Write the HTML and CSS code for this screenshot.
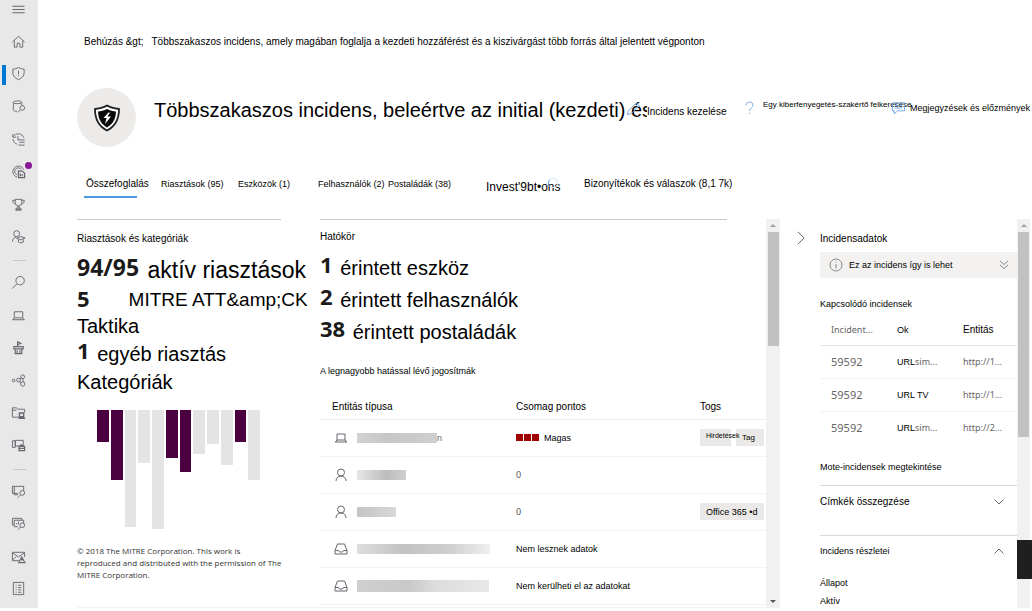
FILE: index.html
```html
<!DOCTYPE html>
<html lang="hu">
<head>
    <meta charset="UTF-8">
    <title>Incidens</title>
    <link rel="stylesheet" href="styles.css">
</head>
<body>
<div class="app">
    <nav class="sidebar">
        <button class="nav-btn menu" aria-label="Menü"><svg viewBox="0 0 16 16"><path d="M1.500 4.500h13M1.500 8h13M1.500 11.500h13" stroke-width="1.200"/></svg></button>
        <button class="nav-btn" aria-label="Kezdőlap"><svg viewBox="0 0 16 16"><path d="M1.500 8.500 8 2.500l6.500 6M3.500 7v7h3v-4h3v4h3V7"/></svg></button>
        <button class="nav-btn active" aria-label="Incidensek"><svg viewBox="0 0 16 16"><path d="M8 1.500c2 1.300 4 1.800 6 1.800v4c0 3.500-2.500 5.700-6 7.200-3.500-1.500-6-3.700-6-7.200v-4c2 0 4-.5 6-1.800zM8 5v4M8 10v1"/></svg></button>
        <button class="nav-btn" aria-label="Adatok"><svg viewBox="0 0 16 16"><ellipse cx="7" cy="3.500" rx="4.500" ry="1.500"/><path d="M2.500 3.500v8c0 1 1.500 1.600 4 1.600M11.500 3.500v3"/><circle cx="12" cy="9.500" r="2.500"/><path d="m10.200 11.300-3 3"/></svg></button>
        <button class="nav-btn" aria-label="Előzmények"><svg viewBox="0 0 16 16"><path d="M2 2v3.500h3.500M2.300 5C5 .500 12 1 13.500 6M2 7.500c.3 3 2.500 5 4.500 5.500M7.500 4.500v4h7M9 11h5.500M8 14h6.500"/></svg></button>
        <button class="nav-btn dot" aria-label="Fenyegetéselemzés"><svg viewBox="0 0 16 16"><path d="M6.500 14A6 6 0 1 1 13.600 6M6.500 11.500A3.800 3.800 0 1 1 11 6M7.500 8v-1"/><path d="M8 7.500h4l2.500 2.500v4.500H8zM10 13v-3M12 13v-2" stroke-width="1.300"/></svg></button>
        <button class="nav-btn" aria-label="Biztonsági pontszám"><svg viewBox="0 0 16 16"><path d="M4.500 2.500h7V6c0 2-1.500 3.500-3.500 3.500S4.500 8 4.500 6zM4.500 3.500H1.800C1.800 6 3 7.300 5 7.500M11.500 3.500h2.700c0 2.500-1.200 3.800-3.200 4M7.300 9.500v2.500M8.700 9.500v2.500M4.500 13.800h7M5.500 12h5v1.800h-5z"/></svg></button>
        <button class="nav-btn" aria-label="Képzés"><svg viewBox="0 0 16 16"><circle cx="6" cy="5" r="3.200"/><path d="M1.500 13.500c.3-3 2-5 4.500-5M6 10l4.500-2L15 9.500l-4.500 2zM8 11.500V14c1.500 1 3.500 1 5 0v-3"/></svg></button>
        <hr>
        <button class="nav-btn" aria-label="Keresés"><svg viewBox="0 0 16 16"><circle cx="9.700" cy="6" r="4.500"/><path d="M6.500 9.300 1.300 14.500"/></svg></button>
        <button class="nav-btn" aria-label="Eszközök"><svg viewBox="0 0 16 16"><path d="M3.500 4h9v6.500h-9zM1.500 12.500h13M2 12.500l1.500-2M14 12.500l-1.500-2"/></svg></button>
        <button class="nav-btn" aria-label="Hírszerzés"><svg viewBox="0 0 16 16"><path d="M7 7V2l3.500 1.500L7 5M3 7h10v2.500H3zM4.500 9.500v5h7v-5M6.500 11v3.500M9.500 11v3.500" stroke-width="1.200"/></svg></button>
        <button class="nav-btn" aria-label="Kapcsolatok"><svg viewBox="0 0 16 16"><circle cx="2.800" cy="8" r="1.500"/><circle cx="8" cy="7.500" r="2"/><circle cx="12.500" cy="4" r="2"/><circle cx="12.500" cy="11.700" r="2.300"/><path d="M9.500 6.300 11 5.300M9 9.300l1.700 1.300M12.700 6v3.400"/></svg></button>
        <button class="nav-btn" aria-label="Mappák"><svg viewBox="0 0 16 16"><path d="M8 13H1.500V3H6l1.500 1.500h7V8M1.500 5.500H6"/><path d="M9 8.500h4.500v4H9zM8 14.200h7" stroke-width="1.500"/></svg></button>
        <button class="nav-btn" aria-label="Eszközkezelés"><svg viewBox="0 0 16 16"><path d="M4.500 8.500V2.500h8.500V7M1.500 3h3v7h-3zM4.500 8.500h4"/><path d="M8.500 9h6v4.500h-6zM10 9V7.500h3V9M8.500 11h6" stroke-width="1.300"/></svg></button>
        <hr>
        <button class="nav-btn" aria-label="E-mail keresés"><svg viewBox="0 0 16 16"><path d="M3.500 2.500h10V7M1.500 2.500v7.500h6M1.500 2.500h2v9h4"/><circle cx="12" cy="9.500" r="2.500"/><path d="m10.300 11.500-3 3"/></svg></button>
        <button class="nav-btn" aria-label="Vizsgálatok"><svg viewBox="0 0 16 16"><path d="M3.500 4.500h10V8M1.500 2.500h10v2M1.500 2.500v7h2M3.500 4.500v7h4M6 9V7.500M8 9V6"/><circle cx="12" cy="9.800" r="2.500"/><path d="m10.300 11.700-3 3"/></svg></button>
        <button class="nav-btn" aria-label="Beküldések"><svg viewBox="0 0 16 16"><path d="M8.500 12.500h-7v-9h13v5M1.500 4l6.500 4.500L14.500 4M1.500 12l4-4"/><path d="m11.500 8.500 3.300 6H8.200zM11.500 10.500v2" stroke-width="1.200"/></svg></button>
        <button class="nav-btn" aria-label="Jelentések"><svg viewBox="0 0 16 16"><path d="M2.500 1.500h11v13h-11zM5 4.500h1M7.500 4.500H11M5 7h1M7.500 7H11M5 9.500h1M7.500 9.500H11M5 12h1M7.500 12H11"/></svg></button>
    </nav>

    <main class="main">
        <div class="breadcrumb"><a href="#">Behúzás &amp;gt;</a><span>Többszakaszos incidens, amely magában foglalja a kezdeti hozzáférést és a kiszivárgást több forrás által jelentett végponton</span></div>

        <header class="page-header">
            <div class="badge">
                <svg viewBox="0 0 28 28"><path d="M14 1.500c4 2.500 8 3 12 3.500 0 10-3 17-12 21.500C5 22 2 15 2 5c4-.5 8-1 12-3.500z" fill="#fff" stroke="#222" stroke-width="1.800"/><path d="M14 5c3 1.600 6 2.300 9 2.500-.3 7.500-3 12.500-9 16-6-3.500-8.700-8.500-9-16C8 7.300 11 6.600 14 5z" fill="#0a0a0a"/><path d="M15.500 8.500 10.500 14h3l-1.500 6 6-7.500h-3.500l2.500-4z" fill="#fff"/></svg>
            </div>
            <h1 class="title">Többszakaszos incidens, beleértve az initial (kezdeti) és</h1>
            <div class="commands">
                <button class="cmd manage"><svg class="pencil" viewBox="0 0 16 16"><path d="m1.500 14.500 1-4L11 2l3 3-8.500 8.500zM9.500 3.500l3 3"/></svg><span>Incidens kezelése</span></button>
                <button class="cmd expert"><svg class="question" viewBox="0 0 10 16"><path d="M1 5c0-5 8-5 8-.5C9 8 5 7.500 5 11.500M5 13.500V15"/></svg><span>Egy kiberfenyegetés-szakértő felkeresése</span></button>
                <button class="cmd comments"><svg viewBox="0 0 16 14"><path d="M1.500 1.500h13V10H7l-3.500 3.200V10h-2zM4 4.500h8M4 7h8"/></svg>Megjegyzések és előzmények</button>
            </div>
        </header>

        <nav class="tabs">
            <a class="tab selected" href="#">Összefoglalás</a>
            <a class="tab" href="#">Riasztások (95)</a>
            <a class="tab" href="#">Eszközök (1)</a>
            <a class="tab" href="#">Felhasználók (2)</a>
            <a class="tab" href="#">Postaládák (38)</a>
            <a class="tab invest" href="#">Invest'9bt•ons<i class="spinner"></i></a>
            <a class="tab evidence" href="#">Bizonyítékok és válaszok (8,1 7k)</a>
        </nav>

        <div class="content">
            <div class="panes">
                <section class="alerts">
                    <h2 class="label">Riasztások és kategóriák</h2>
                    <p class="stat wide"><b>94/95</b> aktív riasztások</p>
                    <p class="stat mitre"><b>5</b><span>MITRE ATT&amp;amp;CK</span></p>
                    <p class="stat sub">Taktika</p>
                    <p class="stat other"><b>1</b> egyéb riasztás</p>
                    <p class="stat sub">Kategóriák</p>
                    <div class="chart">
                        <i class="bar hit" style="height:32px"></i>
                        <i class="bar hit" style="height:70px"></i>
                        <i class="bar" style="height:117px"></i>
                        <i class="bar" style="height:53px"></i>
                        <i class="bar" style="height:119px"></i>
                        <i class="bar hit" style="height:48px"></i>
                        <i class="bar hit" style="height:62px"></i>
                        <i class="bar" style="height:44px"></i>
                        <i class="bar" style="height:34px"></i>
                        <i class="bar" style="height:55px"></i>
                        <i class="bar hit" style="height:32px"></i>
                        <i class="bar" style="height:70px"></i>
                    </div>
                    <p class="credit">© 2018 The MITRE Corporation. This work is<br>reproduced and distributed with the permission of The<br>MITRE Corporation.</p>
                </section>

                <section class="scope">
                    <h2 class="label">Hatókör</h2>
                    <p class="stat"><b>1</b> érintett eszköz</p>
                    <p class="stat"><b>2</b> érintett felhasználók</p>
                    <p class="stat"><b>38</b> érintett postaládák</p>
                    <h3 class="sublabel">A legnagyobb hatással lévő jogosítmák</h3>
                    <table class="entities">
                        <thead>
                            <tr><th>Entitás típusa</th><th>Csomag pontos</th><th class="tags">Togs</th></tr>
                        </thead>
                        <tbody>
                            <tr>
                                <td><div class="entity"><svg viewBox="0 0 14 14"><path d="M3 3h8v6H3zM1 11h12M1.500 11 3 9M12.500 11 11 9"/></svg><i class="masked m1"></i><span>n</span></div></td>
                                <td><div class="risk"><i></i><i></i><i></i><span>Magas</span></div></td>
                                <td><div class="chips"><span class="chip tiny">Hirdetések</span><span class="chip small">Tag</span></div></td>
                            </tr>
                            <tr>
                                <td><div class="entity"><svg viewBox="0 0 14 14"><circle cx="7" cy="4.500" r="3.500"/><path d="M2 13c0-3 2-5 5-5s5 2 5 5"/></svg><i class="masked m2"></i></div></td>
                                <td class="num">0</td><td></td>
                            </tr>
                            <tr>
                                <td><div class="entity"><svg viewBox="0 0 14 14"><circle cx="7" cy="4.500" r="3.500"/><path d="M2 13c0-3 2-5 5-5s5 2 5 5"/></svg><i class="masked m3"></i></div></td>
                                <td class="num">0</td>
                                <td><div class="chips"><span class="chip">Office 365 •d</span></div></td>
                            </tr>
                            <tr>
                                <td><div class="entity"><svg viewBox="0 0 14 14"><path d="M3.500 2h7L13 8.500V12H1V8.500zM1 8.500h3.500L5.500 10h3l1-1.500H13"/></svg><i class="masked m4"></i></div></td>
                                <td>Nem lesznek adatok</td><td></td>
                            </tr>
                            <tr>
                                <td><div class="entity"><svg viewBox="0 0 14 14"><path d="M3.500 2h7L13 8.500V12H1V8.500zM1 8.500h3.500L5.500 10h3l1-1.500H13"/></svg><i class="masked m5"></i></div></td>
                                <td>Nem kerülheti el az adatokat</td><td></td>
                            </tr>
                        </tbody>
                    </table>
                </section>
            </div>
            <div class="scrollbar"><i class="up"></i><i class="thumb"></i><i class="down"></i></div>

            <aside class="details">
                <button class="collapse" aria-label="Összecsukás"><svg viewBox="0 0 8 14"><path d="m.8.8 6.400 6.200-6.400 6.200"/></svg></button>
                <div class="details-body">
                    <h2 class="label">Incidensadatok</h2>
                    <div class="notice"><svg viewBox="0 0 14 14"><circle cx="7" cy="7" r="6"/><path d="M7 6v4.500M7 3.500v1"/></svg><span>Ez az incidens így is lehet</span><svg class="more" viewBox="0 0 10 10"><path d="m1 1 4 3.500L9 1M1 5l4 3.500L9 5"/></svg></div>
                    <h3 class="sublabel">Kapcsolódó incidensek</h3>
                    <table class="related">
                        <thead><tr><th class="soft">Incident...</th><th>Ok</th><th class="entitas">Entitás</th></tr></thead>
                        <tbody>
                            <tr><td class="id">59592</td><td>URL<span class="soft">sim...</span></td><td class="soft">http://1...</td></tr>
                            <tr><td class="id">59592</td><td>URL TV</td><td class="soft">http://1...</td></tr>
                            <tr><td class="id">59592</td><td>URL<span class="soft">sim...</span></td><td class="soft">http://2...</td></tr>
                        </tbody>
                    </table>
                    <a class="more-link" href="#">Mote-incidensek megtekintése</a>
                    <button class="fold tags-fold">Címkék összegzése<svg viewBox="0 0 10 6"><path d="m.5.5 4.500 4.500L9.500.5"/></svg></button>
                    <button class="fold">Incidens részletei<svg viewBox="0 0 10 6"><path d="M.5 5.500 5 1l4.500 4.500"/></svg></button>
                    <dl class="facts"><dt>Állapot</dt><dd>Aktív</dd></dl>
                </div>
            </aside>
            <div class="scrollbar side"><i class="up"></i><i class="thumb"></i></div>
        </div>
    </main>
    <button class="feedback" aria-label="Visszajelzés"></button>
</div>
</body>
</html>
```
FILE: styles.css
```css
* {
    margin: 0;
    padding: 0;
    box-sizing: border-box;
}

body {
    background: #fff;
    color: #000;
    font-family: "Liberation Sans", Arial, sans-serif;
    font-size: 10px;
    line-height: 12px;
}

button {
    background: none;
    border: none;
    font: inherit;
    color: inherit;
    text-align: left;
    cursor: pointer;
}

a {
    color: inherit;
    text-decoration: none;
}

h1, h2, h3, th {
    font-weight: normal;
    text-align: left;
}

svg {
    fill: none;
    stroke: #6a656e;
    flex: none;
}

.app {
    display: flex;
    height: 100vh;
    padding-bottom: 3px;
    position: relative;
    overflow: hidden;
}

/* left navigation */
.sidebar {
    width: 38px;
    flex: none;
    background: #e8e8e8;
    display: flex;
    flex-direction: column;
    padding-bottom: 3px;
}

.nav-btn {
    flex: 1;
    min-height: 0;
    display: flex;
    align-items: center;
    justify-content: center;
    padding-right: 1px;
    position: relative;
}

.nav-btn svg {
    width: 15px;
    height: 15px;
}

.nav-btn.menu {
    flex: none;
    height: 25px;
    padding-bottom: 7px;
}

.nav-btn.active::before {
    content: '';
    position: absolute;
    left: 2px;
    top: 7px;
    width: 4px;
    height: 20px;
    background: #0078d4;
}

.nav-btn.dot::after {
    content: '';
    position: absolute;
    right: 6px;
    top: 7px;
    width: 7px;
    height: 7px;
    border-radius: 50%;
    background: #881798;
}

.sidebar hr {
    border: none;
    height: 1px;
    width: 13px;
    margin: 7px auto 5px;
    background: #c8c8c8;
}

.main {
    flex: 1;
    min-width: 0;
    display: flex;
    flex-direction: column;
    padding: 36px 2px 0 39px;
}

.breadcrumb {
    display: flex;
    gap: 8px;
    padding-left: 7px;
    white-space: nowrap;
}

/* header */
.page-header {
    display: flex;
    align-items: center;
    margin-top: 40px;
}

.badge {
    width: 59px;
    height: 59px;
    flex: none;
    border-radius: 50%;
    background: #edebe9;
    display: flex;
    align-items: center;
    justify-content: center;
}

.badge svg {
    width: 28px;
    height: 28px;
    stroke: none;
}

.title {
    flex: 1;
    min-width: 0;
    margin-left: 18px;
    padding-bottom: 16px;
    font-size: 20px;
    line-height: 24px;
    white-space: nowrap;
}

.commands {
    display: flex;
    align-items: center;
    padding-bottom: 20px;
    white-space: nowrap;
}

.commands svg {
    stroke: #6fa3dc;
}

.cmd {
    display: flex;
    align-items: center;
    position: relative;
}

.cmd.manage {
    width: 98px;
    padding-top: 8px;
}

.manage span {
    background: #fff;
}

.pencil {
    position: absolute;
    left: -21px;
    top: 3px;
    width: 15px;
    height: 15px;
}

.cmd.expert {
    width: 146px;
    gap: 9px;
    font-size: 8px;
}

.cmd.expert span {
    padding-bottom: 6px;
}

.question {
    width: 9px;
    height: 14px;
}

.cmd.comments {
    width: 139px;
    gap: 4px;
    font-size: 9px;
}

.cmd.comments svg {
    width: 15px;
    height: 14px;
}

/* tabs */
.tabs {
    display: grid;
    grid-template-columns: 77px 77px 80px 70px 98px 98px auto;
    padding-left: 7px;
    margin-top: 30px;
    white-space: nowrap;
}

.tab {
    font-size: 9px;
    line-height: 14px;
    height: 21px;
    position: relative;
}

.tab.selected {
    padding-left: 2px;
}

.tab.selected, .tab.evidence {
    font-size: 10px;
}

.tab.selected::after {
    content: '';
    position: absolute;
    left: 0;
    bottom: 0;
    width: 53px;
    height: 2px;
    background: #4a9be3;
}

.tab.invest {
    font-size: 12px;
    line-height: 20px;
}

.spinner {
    position: absolute;
    left: 62px;
    top: 1px;
    width: 10px;
    height: 10px;
    border: 1px solid #cfe4f7;
    border-left-color: #5ba3e0;
    border-radius: 50%;
}

/* content */
.content {
    flex: 1;
    min-height: 0;
    margin-top: 21px;
    display: flex;
}

.panes {
    flex: 1;
    min-width: 0;
    display: flex;
    gap: 39px;
    overflow: hidden;
    border-bottom: 1px solid #f3f3f3;
}

.alerts {
    width: 204px;
    flex: none;
    border-top: 1px solid #c8c8c8;
    white-space: nowrap;
}

.scope {
    flex: 1;
    min-width: 0;
}

.scope::before {
    content: '';
    display: block;
    height: 1px;
    margin-right: 39px;
    background: #c8c8c8;
}

.label {
    font-size: 10px;
    line-height: 12px;
    padding-top: 13px;
}

.sublabel {
    font-size: 9px;
    line-height: 12px;
}

.stat {
    font-size: 20px;
    line-height: 32px;
    white-space: nowrap;
}

.stat b {
    font-family: "Open Sans", "Noto Sans", sans-serif;
    font-size: 22px;
    font-weight: 700;
    line-height: 20px;
    color: #1b1b1b;
    margin-right: 2px;
    position: relative;
    top: -2px;
}

.alerts .stat {
    line-height: 25px;
}

.alerts .wide {
    font-size: 23px;
    line-height: 32px;
    margin-top: 9px;
}

.wide b {
    font-size: 23px;
}

.alerts .mitre {
    display: flex;
    gap: 37px;
    font-size: 19px;
    line-height: 28px;
}

.mitre b {
    line-height: 28px;
}

.alerts .other {
    line-height: 31px;
}

.scope .label {
    padding-top: 11px;
}

.scope .label + .stat {
    margin-top: 9px;
}

.scope .sublabel {
    margin-top: 17px;
}

.chart {
    display: flex;
    align-items: flex-start;
    gap: 2px;
    height: 120px;
    margin: 15px 21px 0 20px;
}

.bar {
    flex: 1;
    background: #e4e4e4;
}

.bar.hit {
    background: #4b003f;
}

.credit {
    margin-top: 15px;
    font-family: "Open Sans", "Noto Sans", sans-serif;
    font-size: 8px;
    line-height: 12px;
    color: #333;
}

table {
    width: 100%;
    table-layout: fixed;
    border-collapse: collapse;
}

.entities {
    margin-top: 18px;
    white-space: nowrap;
}

.entities th {
    width: 184px;
    height: 24px;
    padding-left: 12px;
    border-bottom: 1px solid #eee;
}

.entities th.tags {
    width: auto;
}

.entities td {
    height: 37px;
    padding-left: 12px;
    font-size: 9px;
    border-bottom: 1px solid #f3f3f3;
}

.entities td.num {
    font-family: "Noto Sans", sans-serif;
    color: #555;
}

.entity {
    display: flex;
    align-items: center;
    padding-left: 2px;
    color: #666;
}

.entity svg {
    width: 14px;
    height: 14px;
    margin-right: 9px;
}

.masked {
    height: 10px;
    background: linear-gradient(90deg, #d2d2d2, #c6c6c6 40%, #cfcfcf);
}

.m1 { width: 80px; }
.m2 { width: 49px; background: linear-gradient(90deg, #e6e6e6, #bdbdbd 60%, #cecece); }
.m3 { width: 39px; background: linear-gradient(90deg, #c4c4c4, #d8d8d8); }
.m4 { width: 133px; background: linear-gradient(90deg, #dedede, #c2c2c2 35%, #cfcfcf 70%, #f0f0f0); }
.m5 { width: 132px; height: 12px; background: linear-gradient(90deg, #cfcfcf, #c9c9c9 40%, #ddd 60%, #e8e8e8); }

.risk {
    display: flex;
    align-items: center;
}

.risk i {
    width: 7px;
    height: 7px;
    background: #a00000;
    margin-right: 1px;
}

.risk span {
    margin-left: 4px;
}

.chips {
    display: flex;
    gap: 5px;
}

.chip {
    height: 17px;
    padding: 0 6px;
    line-height: 18px;
    background: #ebe9e7;
}

.chip.tiny {
    width: 31px;
    font-size: 7px;
    line-height: 14px;
    position: relative;
    z-index: 1;
}

.chip.small {
    font-size: 8px;
    width: 28px;
}

/* scrollbars */
.scrollbar {
    width: 14px;
    flex: none;
    background: #f1f1f1;
    display: flex;
    flex-direction: column;
    align-items: center;
    padding: 5px 0;
}

.scrollbar.side {
    width: 13px;
}

.scrollbar i {
    border: 3px solid transparent;
}

.scrollbar .up {
    border-top: none;
    border-bottom-color: #a0a0a0;
}

.scrollbar .down {
    border-bottom: none;
    border-top-color: #555;
    margin-top: auto;
}

.scrollbar .thumb {
    border: none;
    width: 11px;
    height: 114px;
    margin-top: 5px;
    background: #c1c1c1;
}

.scrollbar.side .thumb {
    height: 205px;
}

/* incident details */
.details {
    width: 237px;
    flex: none;
    display: flex;
    padding-left: 17px;
    overflow: hidden;
}

.collapse {
    width: 23px;
    flex: none;
    height: 38px;
    display: flex;
    align-items: center;
}

.collapse svg {
    width: 8px;
    height: 14px;
}

.details-body {
    flex: 1;
    min-width: 0;
}

.details .label {
    padding-top: 14px;
}

.notice {
    display: flex;
    align-items: center;
    height: 26px;
    margin: 7px 0 20px;
    padding: 0 8px 0 9px;
    font-size: 9px;
    background: #f3f2f1;
}

.notice svg {
    width: 14px;
    height: 14px;
    margin-right: 6px;
    stroke: #888;
}

.notice .more {
    width: 10px;
    height: 10px;
    margin: 0 0 0 auto;
}

.related th, .related td {
    width: 66px;
    height: 33px;
    padding-left: 11px;
    font-size: 9px;
    border-bottom: 1px solid #f3f3f3;
}

.related tr:last-child td {
    border-bottom: none;
}

.related thead th {
    height: 35px;
    padding-top: 6px;
    border-bottom: 1px solid #e6e6e6;
}

.related .entitas {
    font-size: 10px;
}

.related .id, .related .soft {
    font-family: "Noto Sans", sans-serif;
    font-size: 9px;
    color: #666;
}

.related .id {
    font-size: 11px;
}

.more-link {
    display: block;
    padding: 17px 0 12px;
    font-size: 9px;
}

.fold {
    display: flex;
    justify-content: space-between;
    align-items: center;
    width: 100%;
    height: 31px;
    padding-right: 13px;
    font-size: 9px;
    border-top: 1px solid #d8d8d8;
}

.fold svg {
    width: 10px;
    height: 6px;
}

.tags-fold {
    height: 50px;
    padding-bottom: 18px;
    font-size: 10px;
}

.facts {
    margin-top: 8px;
    font-size: 9px;
    line-height: 18px;
}

.feedback {
    position: absolute;
    right: 0;
    bottom: 32px;
    width: 15px;
    height: 39px;
    background: #1f1f1f;
}
```
